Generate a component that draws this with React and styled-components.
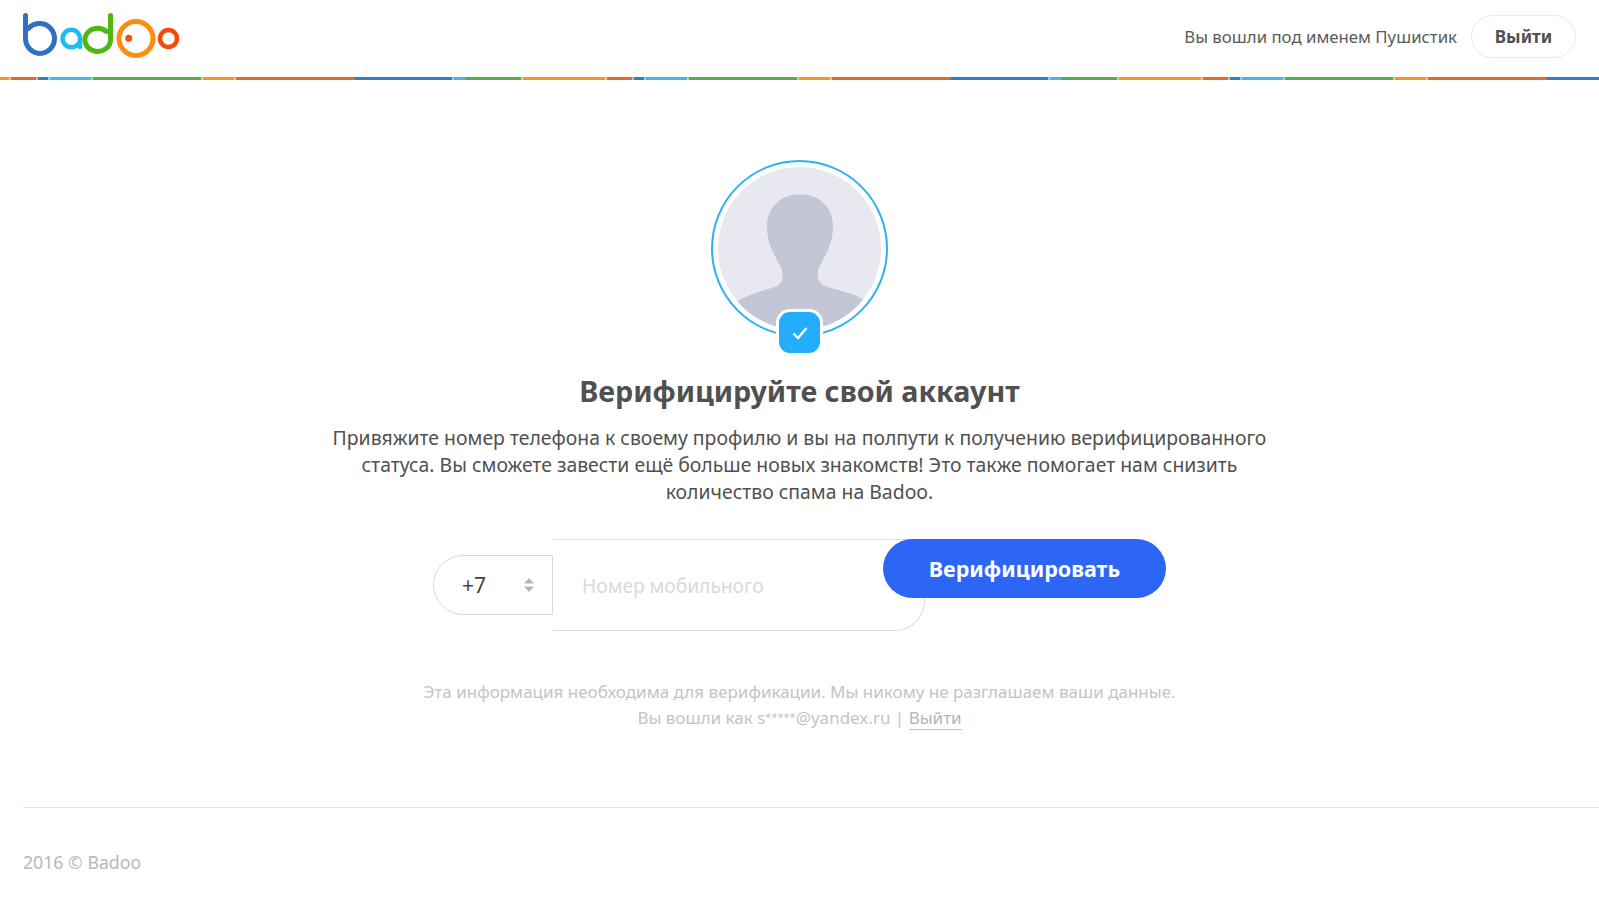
import React from 'react';
import styled, { createGlobalStyle } from 'styled-components';

const fontStack = '"Noto Sans", "Open Sans", Arial, sans-serif';

const stripeSegments = [
  ['#f7981c', 0, 82.5],
  ['#e8672a', 84.5, 109.5],
  ['#2f81c7', 111.5, 122],
  ['#3cb8ea', 123, 164.5],
  ['#4fb04a', 166.5, 274.5],
  ['#f7981c', 276.5, 307.5],
  ['#e8672a', 309.5, 427.5],
  ['#2f81c7', 428.5, 525.5],
  ['#3cb8ea', 527.5, 538.5],
  ['#4fb04a', 539.5, 594.5],
];

const stripeGradient = stripeSegments
  .map(([color, from, to]) => `transparent ${from - 0.01}px, ${color} ${from}px, ${color} ${to}px, transparent ${to + 0.01}px`)
  .join(', ');

const GlobalStyle = createGlobalStyle`
  html, body {
    margin: 0;
    padding: 0;
    background: #fff;
    font-family: ${fontStack};
    color: #505050;
  }
  * {
    box-sizing: border-box;
  }
`;

const Page = styled.div`
  width: 1599px;
  height: 912px;
  overflow: hidden;
`;

const Header = styled.header`
  display: flex;
  align-items: center;
  justify-content: space-between;
  height: 80px;
  padding: 0 23px 8px;
  background-image: linear-gradient(90deg, ${stripeGradient});
  background-size: 596px 3px;
  background-position: -73.5px 77px;
  background-repeat: repeat-x;
`;

const UserBox = styled.div`
  display: flex;
  align-items: center;
  gap: 14px;
`;

const UserName = styled.span`
  font-size: 16.8px;
  color: #5a5a5a;
`;

const LogoutButton = styled.button`
  width: 105px;
  height: 43px;
  border: 1px solid #e9e9e9;
  border-radius: 22px;
  background: #fff;
  font-family: inherit;
  font-size: 17px;
  font-weight: 700;
  color: #505050;
`;

const Main = styled.main`
  display: flex;
  flex-direction: column;
  align-items: center;
  padding-top: 80px;
  height: 727px;
`;

const AvatarRing = styled.div`
  position: relative;
  width: 177px;
  height: 177px;
  padding: 5px;
  border: 2px solid #2db2f0;
  border-radius: 50%;
`;

const AvatarCircle = styled.div`
  width: 163px;
  height: 163px;
  border-radius: 50%;
  background: #e8e9f0;
  overflow: hidden;
`;

const Badge = styled.div`
  position: absolute;
  left: 63px;
  top: 147px;
  display: flex;
  align-items: center;
  justify-content: center;
  width: 47px;
  height: 47px;
  border: 3px solid #fff;
  border-radius: 14px;
  background: #22aefc;
`;

const Title = styled.h1`
  margin: 35px 0 0;
  font-size: 28.7px;
  line-height: 38px;
  font-weight: 700;
  color: #505050;
`;

const Lead = styled.p`
  width: 960px;
  margin: 14px 0 0;
  font-size: 19.4px;
  line-height: 27px;
  text-align: center;
  color: #505050;
`;

const VerifyForm = styled.form`
  display: flex;
  align-items: center;
  margin-top: 34px;
`;

const CodeSelect = styled.div`
  display: flex;
  align-items: center;
  justify-content: space-between;
  width: 120px;
  height: 60px;
  padding: 0 18px 0 28px;
  border: 1px solid #d8d8d8;
  border-radius: 30px 0 0 30px;
  font-size: 21px;
  color: #444;
`;

const PhoneField = styled.input`
  width: 372px;
  height: 92px;
  padding: 0 29px;
  border: 1px solid #dedede;
  border-left: none;
  border-radius: 0 0 30px 0;
  outline: none;
  background: #fff;
  font-family: inherit;
  font-size: 19.2px;
  color: #444;
  &::placeholder {
    color: #d9d9d9;
    opacity: 1;
  }
`;

const SubmitButton = styled.button`
  align-self: flex-start;
  width: 283px;
  height: 59px;
  margin-left: -42px;
  position: relative;
  border: none;
  border-radius: 30px;
  background: #2b66f6;
  font-family: inherit;
  font-size: 21.5px;
  font-weight: 700;
  color: #fff;
`;

const Note = styled.p`
  margin: 48px 0 0;
  font-size: 17px;
  line-height: 26px;
  text-align: center;
  color: #c4c4c4;
`;

const MaskedChars = styled.span`
  font-size: 11px;
  vertical-align: 3px;
  line-height: 1;
`;

const NoteLink = styled.a`
  color: #b5b5b5;
  border-bottom: 1px solid #c4c4c4;
`;

const Footer = styled.footer`
  margin-left: 23px;
  padding-top: 41px;
  border-top: 1px solid #e6e6e6;
  font-size: 17.7px;
  line-height: 26px;
  color: #b8b8b8;
`;

const BadooLogo = () => (
  <svg width="160" height="48" viewBox="23 12 160 48" fill="none" strokeWidth="5" strokeLinecap="round">
    <path d="M25.500 15.500V38.500a14.500 15 0 1 0 14.500-15c-5 0-9 2-11.500 5" stroke="#2f6fc4" />
    <path d="M80 47V38.500a8.700 8.700 0 1 0-8.700 8.700c3 0 5.500-1.300 7-3.500" stroke="#1dbcf0" strokeWidth="4.500" />
    <path d="M110.500 15.500V40a12.800 11.500 0 1 1-4-8.500" stroke="#4cb810" />
    <circle cx="136" cy="38.500" r="17" stroke="#ff8c0f" />
    <circle cx="128.700" cy="38.300" r="3.500" fill="#f5500f" stroke="none" />
    <circle cx="168.500" cy="38.500" r="8.500" stroke="#f5470f" strokeWidth="4.500" />
  </svg>
);

const Silhouette = () => (
  <svg width="163" height="163" viewBox="0 -1.500 163 163">
    <path
      d="M82 26C102 26 115 39 115 58C115 78 105 90 101 99C98 108 100 115 108 118C120 122 134 124 145 131L163 165H0L19 133C30 126 46 122 58 118C65 115 66 108 63 99C59 90 49 78 49 58C49 39 62 26 82 26Z"
      fill="#c2c6d5"
    />
  </svg>
);

const CheckIcon = () => (
  <svg width="16" height="14" viewBox="0 0 16 14" fill="none">
    <path d="M1.500 7.500L6 12L14.500 2" stroke="#fff" strokeWidth="2.400" />
  </svg>
);

const SortArrows = () => (
  <svg width="10" height="14" viewBox="0 0 10 14">
    <path d="M5 0L10 5.500H0Z M0 8.500H10L5 14Z" fill="#b5b5b5" />
  </svg>
);

export default function App() {
  return (
    <Page>
      <GlobalStyle />
      <Header>
        <BadooLogo />
        <UserBox>
          <UserName>Вы вошли под именем Пушистик</UserName>
          <LogoutButton type="button">Выйти</LogoutButton>
        </UserBox>
      </Header>
      <Main>
        <AvatarRing>
          <AvatarCircle>
            <Silhouette />
          </AvatarCircle>
          <Badge>
            <CheckIcon />
          </Badge>
        </AvatarRing>
        <Title>Верифицируйте свой аккаунт</Title>
        <Lead>
          Привяжите номер телефона к своему профилю и вы на полпути к получению верифицированного
          <br />
          статуса. Вы сможете завести ещё больше новых знакомств! Это также помогает нам снизить
          <br />
          количество спама на Badoo.
        </Lead>
        <VerifyForm>
          <CodeSelect>
            +7
            <SortArrows />
          </CodeSelect>
          <PhoneField placeholder="Номер мобильного" />
          <SubmitButton type="button">Верифицировать</SubmitButton>
        </VerifyForm>
        <Note>
          Эта информация необходима для верификации. Мы никому не разглашаем ваши данные.
          <br />
          Вы вошли как s<MaskedChars>*****</MaskedChars>@yandex.ru | <NoteLink>Выйти</NoteLink>
        </Note>
      </Main>
      <Footer>2016 © Badoo</Footer>
    </Page>
  );
}
